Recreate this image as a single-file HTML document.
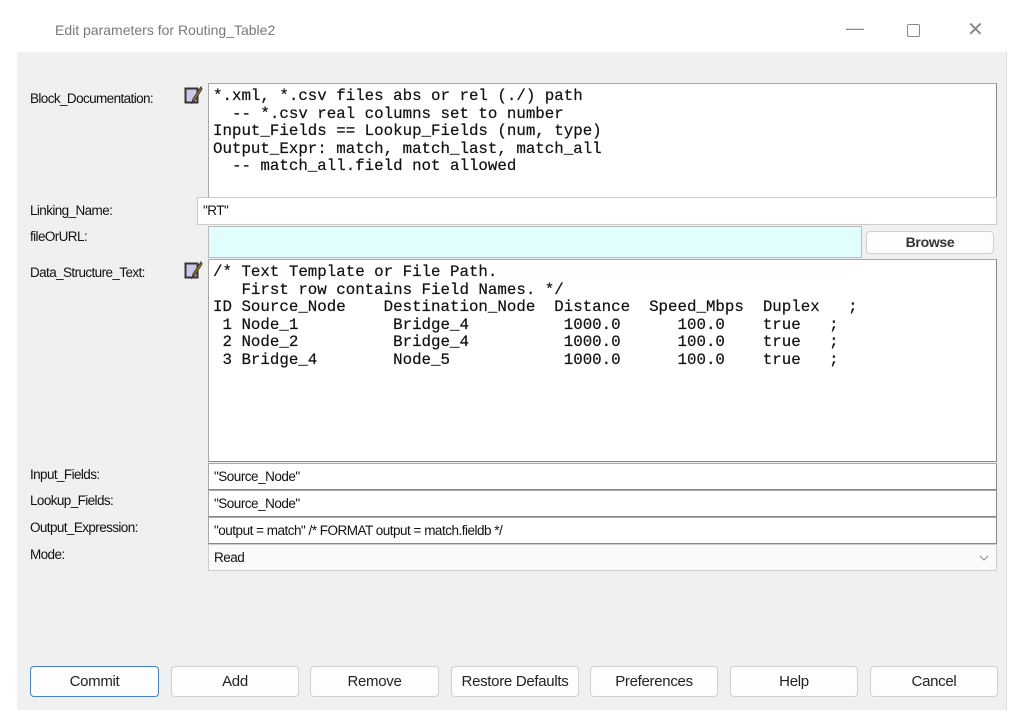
<!DOCTYPE html>
<html><head><meta charset="utf-8"><style>
*{box-sizing:border-box;margin:0;padding:0}
body{width:1024px;height:725px;background:#fff;position:relative;overflow:hidden;font-family:"Liberation Sans",sans-serif;}
.win{position:absolute;left:17px;top:52px;width:990px;height:658px;background:#f0f0f0;border-right:1px solid #ddd}
.title{position:absolute;left:55px;top:22px;font-size:14px;color:#7a7a7a}
.lbl{position:absolute;left:30px;font-size:13.5px;color:#111;letter-spacing:-0.6px}
.box{position:absolute;background:#fff;border:1px solid #a8a8a8;border-right-color:#888;border-bottom-color:#888}
.mono{font-family:"Liberation Mono",monospace;font-size:15.8px;line-height:17.6px;white-space:pre;color:#111;padding:4px 0 0 4px;-webkit-text-stroke:0.2px #111}
.field{font-size:13.5px;letter-spacing:-0.5px;padding:5px 0 0 5px;color:#111}
.btn{position:absolute;top:666px;height:31px;background:#fdfdfd;border:1px solid #d0d0d0;border-radius:4px;font-size:15px;color:#222;text-align:center;line-height:29px;letter-spacing:-0.3px}
.icon{position:absolute;width:19px;height:19px}
.ctl{position:absolute;top:22px;color:#888;font-size:18px}
</style></head><body>
<div class="title">Edit parameters for Routing_Table2</div>
<div class="ctl" style="left:846px;top:18px">—</div>
<div style="position:absolute;left:907px;top:24px;width:13px;height:13px;border:1px solid #888;border-radius:2px"></div>
<div class="ctl" style="left:967px;top:17px;font-size:20px">✕</div>
<div class="win"></div>

<div class="lbl" style="top:91px">Block_Documentation:</div>
<svg class="icon" style="left:184px;top:86px" viewBox="0 0 19 19"><rect x="1.5" y="2.5" width="12" height="14" fill="#c8c8ec" stroke="#333" stroke-width="2"/><path d="M17 1 L9 13 L8 17 L11 14 L18 3Z" fill="#b8860b" stroke="#333" stroke-width="1"/></svg>
<div class="box mono" style="left:208px;top:83px;width:789px;height:115px">*.xml, *.csv files abs or rel (./) path
  -- *.csv real columns set to number
Input_Fields == Lookup_Fields (num, type)
Output_Expr: match, match_last, match_all
  -- match_all.field not allowed</div>

<div class="lbl" style="top:203px">Linking_Name:</div>
<div class="box field" style="left:197px;top:197px;width:800px;height:28px;border-color:#ccc">"RT"</div>

<div class="lbl" style="top:229px">fileOrURL:</div>
<div class="box" style="left:208px;top:226px;width:654px;height:32px;background:#e0fefe;border-color:#bbb"></div>
<div class="btn" style="left:866px;top:231px;width:128px;height:23px;line-height:21px;font-size:14px;font-weight:bold;color:#333">Browse</div>

<div class="lbl" style="top:265px">Data_Structure_Text:</div>
<svg class="icon" style="left:184px;top:261px" viewBox="0 0 19 19"><rect x="1.5" y="2.5" width="12" height="14" fill="#c8c8ec" stroke="#333" stroke-width="2"/><path d="M17 1 L9 13 L8 17 L11 14 L18 3Z" fill="#b8860b" stroke="#333" stroke-width="1"/></svg>
<div class="box mono" style="left:208px;top:259px;width:789px;height:203px">/* Text Template or File Path.
   First row contains Field Names. */
ID Source_Node    Destination_Node  Distance  Speed_Mbps  Duplex   ;
 1 Node_1          Bridge_4          1000.0      100.0    true   ;
 2 Node_2          Bridge_4          1000.0      100.0    true   ;
 3 Bridge_4        Node_5            1000.0      100.0    true   ;</div>

<div class="lbl" style="top:467px">Input_Fields:</div>
<div class="box field" style="left:208px;top:463px;width:789px;height:27px">"Source_Node"</div>
<div class="lbl" style="top:493px">Lookup_Fields:</div>
<div class="box field" style="left:208px;top:490px;width:789px;height:27px">"Source_Node"</div>
<div class="lbl" style="top:520px">Output_Expression:</div>
<div class="box field" style="left:208px;top:517px;width:789px;height:27px">"output = match" /* FORMAT output = match.fieldb */</div>
<div class="lbl" style="top:547px">Mode:</div>
<div class="box field" style="left:208px;top:544px;width:789px;height:27px;background:#fafafa;border-color:#ccc">Read<svg style="position:absolute;right:7px;top:10px" width="10" height="6" viewBox="0 0 10 6"><path d="M1 1 L5 5 L9 1" fill="none" stroke="#888" stroke-width="1"/></svg></div>

<div class="btn" style="left:30px;width:129px;border:1.5px solid #4a7fc0">Commit</div>
<div class="btn" style="left:171px;width:128px">Add</div>
<div class="btn" style="left:310px;width:129px">Remove</div>
<div class="btn" style="left:451px;width:128px">Restore Defaults</div>
<div class="btn" style="left:590px;width:128px">Preferences</div>
<div class="btn" style="left:730px;width:128px">Help</div>
<div class="btn" style="left:870px;width:128px">Cancel</div>
</body></html>
